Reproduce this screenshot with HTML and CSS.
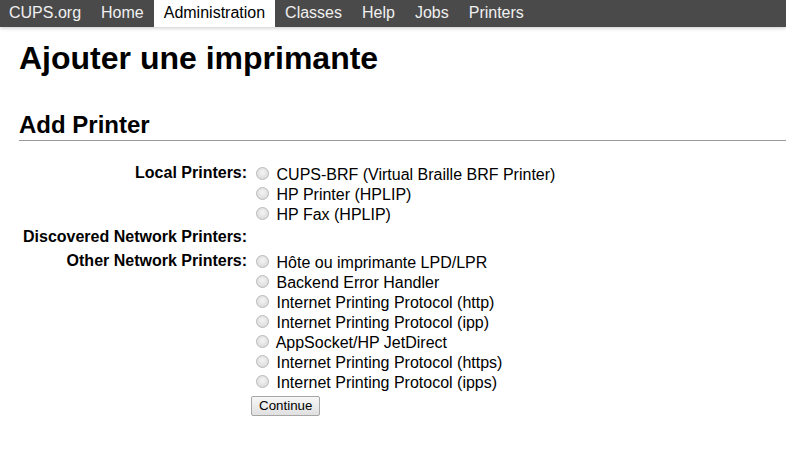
FILE: index.html
```html
<!DOCTYPE html>
<html lang="fr">
<head>
<meta charset="utf-8">
<title>Ajouter une imprimante - CUPS</title>
<link rel="stylesheet" href="styles.css">
</head>
<body>
<header class="header">
  <ul class="nav">
    <li><a href="#">CUPS.org</a></li>
    <li><a href="#">Home</a></li>
    <li class="active"><a href="#">Administration</a></li>
    <li><a href="#">Classes</a></li>
    <li><a href="#">Help</a></li>
    <li><a href="#">Jobs</a></li>
    <li><a href="#">Printers</a></li>
  </ul>
</header>
<main class="body">
  <h1 class="title">Ajouter une imprimante</h1>
  <h2 class="section">Add Printer</h2>
  <form class="form">
    <table class="grid">
      <tr>
        <th class="label">Local Printers:</th>
        <td class="choices">
          <label class="opt"><input type="radio" name="device" class="radio"> CUPS-BRF (Virtual Braille BRF Printer)</label>
          <label class="opt"><input type="radio" name="device" class="radio"> HP Printer (HPLIP)</label>
          <label class="opt"><input type="radio" name="device" class="radio"> HP Fax (HPLIP)</label>
        </td>
      </tr>
      <tr>
        <th class="label">Discovered Network Printers:</th>
        <td class="choices"></td>
      </tr>
      <tr>
        <th class="label">Other Network Printers:</th>
        <td class="choices">
          <label class="opt"><input type="radio" name="device" class="radio"> Hôte ou imprimante LPD/LPR</label>
          <label class="opt"><input type="radio" name="device" class="radio"> Backend Error Handler</label>
          <label class="opt"><input type="radio" name="device" class="radio"> Internet Printing Protocol (http)</label>
          <label class="opt"><input type="radio" name="device" class="radio"> Internet Printing Protocol (ipp)</label>
          <label class="opt"><input type="radio" name="device" class="radio"> AppSocket/HP JetDirect</label>
          <label class="opt"><input type="radio" name="device" class="radio"> Internet Printing Protocol (https)</label>
          <label class="opt"><input type="radio" name="device" class="radio"> Internet Printing Protocol (ipps)</label>
        </td>
      </tr>
      <tr>
        <td></td>
        <td class="choices"><button type="button" class="btn">Continue</button></td>
      </tr>
    </table>
  </form>
</main>
</body>
</html>
```
FILE: styles.css
```css
html, body {
  margin: 0;
  padding: 0;
  background: #fff;
}
body {
  font-family: "Liberation Sans", Arial, sans-serif;
  font-size: 16px;
  color: #000;
}
.header {
  background: #4a4a4a;
  height: 27px;
  box-shadow: 0 1px 4px rgba(0, 0, 0, 0.22);
  position: relative;
}
.nav {
  list-style: none;
  margin: 0 0 0 -1px;
  padding: 0;
  display: flex;
  height: 27px;
}
.nav li {
  display: block;
}
.nav a {
  display: block;
  height: 27px;
  line-height: 25px;
  padding: 0 10px;
  color: #f0f0f0;
  text-decoration: none;
  font-size: 16px;
}
.nav .active a {
  background: #fff;
  color: #000;
}
.body {
  padding: 0 0 0 19px;
}
.title {
  font-size: 32px;
  line-height: 37px;
  font-weight: bold;
  margin: 13px 0 0;
}
.section {
  font-size: 24px;
  line-height: 28px;
  font-weight: bold;
  margin: 34px 0 0;
  padding: 0 0 1px;
  border-bottom: 1px solid #999;
}
.form {
  margin: 0;
}
.grid {
  margin: 20px 0 0 1px;
  border-spacing: 2px;
}
.label {
  text-align: right;
  vertical-align: top;
  padding: 2px 1px 4px;
  font-weight: bold;
  white-space: nowrap;
  line-height: 16px;
}
.choices {
  padding: 1px;
  vertical-align: top;
}
.opt {
  display: block;
  height: 19px;
  padding-top: 1px;
  line-height: 20px;
  white-space: nowrap;
}
.radio {
  appearance: none;
  -webkit-appearance: none;
  width: 13px;
  height: 13px;
  margin: 2px 3px 0 5px;
  border-radius: 50%;
  border: 1px solid #b9b9b9;
  background: radial-gradient(circle at 50% 40%, #f4f4f4 0%, #dedede 70%, #d2d2d2 100%);
  box-sizing: border-box;
  vertical-align: top;
}
.btn {
  font-family: "Liberation Sans", Arial, sans-serif;
  font-size: 13.33px;
  line-height: 16px;
  color: #000;
  padding: 1px 7px;
  border: 1px solid #a6a6a6;
  border-radius: 2px;
  background: linear-gradient(#f7f7f7, #e0e0e0);
  margin: 0;
  display: block;
}
```
